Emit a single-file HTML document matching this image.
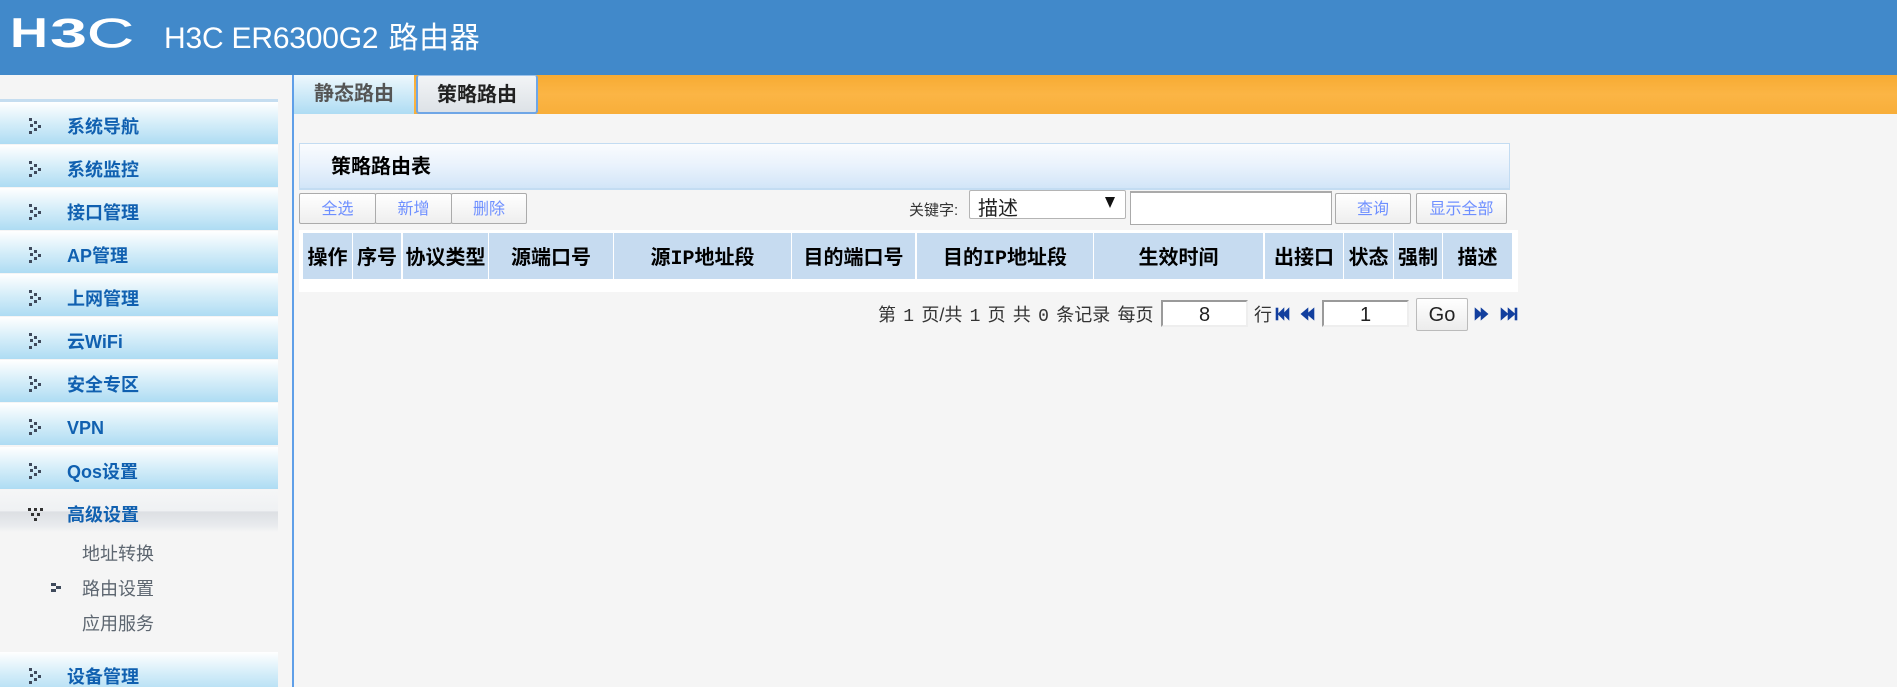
<!DOCTYPE html>
<html lang="zh">
<head>
<meta charset="utf-8">
<title>H3C ER6300G2 路由器</title>
<style>
*{box-sizing:border-box;margin:0;padding:0}
html,body{width:1897px;height:687px;overflow:hidden;background:#f5f5f5}
body{position:relative;font-family:"Liberation Sans","Noto Sans CJK SC",sans-serif}
.a{position:absolute;white-space:nowrap}
#hd{left:0;top:0;width:1897px;height:75px;background:#4189ca}
#title{left:164px;top:17px;font-size:30px;line-height:44px;color:#fff;letter-spacing:-.2px}
#title span{letter-spacing:.6px;margin-left:2px}
#vline{left:292px;top:75px;width:2px;height:612px;background:#5f9fe8}
#tabbar{left:294px;top:75px;width:1603px;height:39px;background:linear-gradient(#f7ab33,#fbb545 50%,#f8ae3a)}
.tab{top:75px;height:39px;text-align:center;font-size:20px;font-weight:700;line-height:39px}
#t1{left:294px;width:120px;background:linear-gradient(#eef8fd,#aedcf3);color:#555}
#t2{left:416px;width:122px;background:linear-gradient(#f2f4f6,#dde2e7);color:#222;border:2px solid #6fa6e6;border-top:1px solid #9cc2ea;border-radius:3px}
#sidetop{left:0;top:99px;width:278px;height:3px;background:#c5ddf0}
.it{left:0;width:278px;height:42px;background:linear-gradient(#fff,#ddf1fa 40%,#aedcf3);color:#1060b0;font-size:18px;font-weight:700;line-height:51px;padding-left:67px}
.it.op{background:linear-gradient(#f5f6f7,#eff1f3 50%,#dcdfe3 52%,#e9ebee 85%,#f5f5f5)}
.sub{left:82px;font-size:18px;line-height:28px;color:#5d6670}
svg{position:absolute;overflow:visible}
.dot{fill:#3f4a5c}
#bar{left:299px;top:143px;width:1211px;height:47px;border:1px solid #c3dcf2;border-bottom:2px solid #c3dcf2;background:linear-gradient(#fafcfe,#e9f2fc 50%,#d2e5f8)}
#bartxt{left:331px;top:151px;font-size:20px;font-weight:700;line-height:32px;color:#000}
.btn{top:193px;height:31px;border:1px solid #ababab;background:linear-gradient(#fff,#eee);color:#6e8fff;font-size:16px;line-height:32px;text-align:center;border-radius:2px}
#kw{left:909px;top:200px;font-size:15px;line-height:22px;color:#333}
#sel{left:969px;top:190px;width:157px;height:29px;border:1px solid #b4b4b4;border-radius:2px;background:#fff;overflow:hidden;font-size:20px;line-height:36px;color:#222;padding-left:8px}
#arrow{left:1105px;top:197px;width:0;height:0;border-left:5px solid transparent;border-right:5px solid transparent;border-top:11px solid #111}
.inp{background:#fff}
#q{left:1130px;top:191px;width:202px;height:34px;border:1px solid #aaa;border-top:2px solid #aaa}
#tb{left:299px;top:230px;width:1219px;height:62px;background:#fff}
.th{top:233px;height:46px;background:#c6dbf0;color:#000;font-size:20px;font-weight:700;line-height:50px;text-align:center;overflow:hidden}
.m{font-family:"Liberation Mono","Noto Sans CJK SC",monospace}
#pg{left:878px;top:302px;font-size:18px;line-height:26px;color:#333;word-spacing:2.25px}
.pi{top:300px;width:87px;height:27px;border:2px solid;border-color:#9a9a9a #eee #eee #9a9a9a;background:#fff;text-align:center;font-size:20px;line-height:27px;color:#222}
#go{left:1416px;top:298px;width:52px;height:33px;border:1px solid #bbb;border-radius:2px;background:linear-gradient(#fff,#ececec);font-size:20px;line-height:33px;text-align:center;color:#222}
.nav{fill:#123f9e;stroke:#123f9e;stroke-width:.6}
</style>
</head>
<body>
<div class="a" id="hd"></div>
<svg style="left:0;top:0" width="160" height="70">
  <text transform="translate(10,47) scale(1.46,1.16)" font-size="36" fill="#fff" font-family="Liberation Sans" font-weight="700">H</text>
  <text transform="translate(50,47) scale(1.85,1.14)" font-size="36" fill="#fff" font-family="Liberation Sans" font-weight="700">3</text>
  <text transform="translate(87,47) scale(1.8,1.14)" font-size="36" fill="#fff" stroke="#fff" stroke-width=".5" font-family="Liberation Sans">C</text>
</svg>
<div class="a" id="title">H3C ER6300G2 <span>路由器</span></div>

<div class="a" id="vline"></div>
<div class="a" id="tabbar"></div>
<div class="a tab" id="t1">静态路由</div>
<div class="a tab" id="t2">策略路由</div>

<div class="a" id="sidetop"></div>
<div class="a it" style="top:102px">系统导航</div>
<div class="a it" style="top:145px">系统监控</div>
<div class="a it" style="top:188px">接口管理</div>
<div class="a it" style="top:231px">AP管理</div>
<div class="a it" style="top:274px">上网管理</div>
<div class="a it" style="top:317px">云WiFi</div>
<div class="a it" style="top:360px">安全专区</div>
<div class="a it" style="top:403px">VPN</div>
<div class="a it" style="top:447px">Qos设置</div>
<div class="a it op" style="top:490px">高级设置</div>
<div class="a sub" style="top:540px">地址转换</div>
<div class="a sub" style="top:575px">路由设置</div>
<div class="a sub" style="top:610px">应用服务</div>
<div class="a it" style="top:652px">设备管理</div>

<svg style="left:0;top:0" width="70" height="687">
  <defs>
    <g id="d">
      <rect class="dot" x="29" y="16" width="3" height="3"/>
      <rect class="dot" x="34" y="19" width="3" height="3"/>
      <rect class="dot" x="30" y="22" width="3" height="3"/>
      <rect class="dot" x="38" y="23" width="3" height="3"/>
      <rect class="dot" x="34" y="26" width="3" height="3"/>
      <rect class="dot" x="29" y="29" width="3" height="3"/>
    </g>
  </defs>
  <use href="#d" y="102"/><use href="#d" y="145"/><use href="#d" y="188"/><use href="#d" y="231"/><use href="#d" y="274"/>
  <use href="#d" y="317"/><use href="#d" y="360"/><use href="#d" y="403"/><use href="#d" y="447"/><use href="#d" y="652"/>
  <g fill="#333">
    <rect x="28" y="508" width="3" height="3"/><rect x="34" y="508" width="3" height="3"/><rect x="40" y="508" width="3" height="3"/>
    <rect x="31" y="513" width="3" height="3"/><rect x="37" y="513" width="3" height="3"/><rect x="34" y="518" width="3" height="3"/>
  </g>
  <g fill="#3f4a5c">
    <rect x="51" y="583" width="5" height="3"/><rect x="51" y="589" width="5" height="3"/><rect x="56" y="586" width="5" height="3"/>
  </g>
</svg>

<div class="a" id="bar"></div>
<div class="a" id="bartxt">策略路由表</div>
<div class="a btn" style="left:299px;width:77px">全选</div>
<div class="a btn" style="left:375px;width:77px">新增</div>
<div class="a btn" style="left:451px;width:76px">删除</div>
<div class="a" id="kw">关键字:</div>
<div class="a" id="sel">描述</div>
<div class="a" id="arrow"></div>
<div class="a inp" id="q"></div>
<div class="a btn" style="left:1335px;width:76px">查询</div>
<div class="a btn" style="left:1416px;width:91px">显示全部</div>

<div class="a" id="tb"></div>
<div class="a th" style="left:303px;width:49px">操作</div>
<div class="a th" style="left:353px;width:48px">序号</div>
<div class="a th" style="left:403px;width:85px">协议类型</div>
<div class="a th" style="left:489px;width:124px">源端口号</div>
<div class="a th" style="left:614px;width:177px">源<span class="m">IP</span>地址段</div>
<div class="a th" style="left:792px;width:123px">目的端口号</div>
<div class="a th" style="left:917px;width:176px">目的<span class="m">IP</span>地址段</div>
<div class="a th" style="left:1094px;width:169px">生效时间</div>
<div class="a th" style="left:1265px;width:78px">出接口</div>
<div class="a th" style="left:1344px;width:49px">状态</div>
<div class="a th" style="left:1394px;width:48px">强制</div>
<div class="a th" style="left:1443px;width:69px">描述</div>

<div class="a" id="pg">第 <span class="m">1</span> 页/共 <span class="m">1</span> 页 共 <span class="m">0</span> 条记录 每页</div>
<div class="a pi" style="left:1161px">8</div>
<div class="a" style="left:1254px;top:302px;font-size:18px;line-height:26px;color:#333">行</div>
<div class="a pi" style="left:1322px">1</div>
<div class="a" id="go">Go</div>
<svg style="left:1270px;top:300px" width="250" height="30">
  <g class="nav">
    <rect x="6" y="8" width="2" height="12"/>
    <path d="M8 14 14 8V20Z"/><path d="M13 14 19 8V20Z"/>
    <path d="M31 14 38 8V20Z"/><path d="M37 14 44 8V20Z"/>
    <path d="M205 8 212 14 205 20Z"/><path d="M211 8 218 14 211 20Z"/>
    <path d="M231 8 238 14 231 20Z"/><path d="M238 8 245 14 238 20Z"/>
    <rect x="245" y="8" width="2" height="12"/>
  </g>
</svg>
</body>
</html>
